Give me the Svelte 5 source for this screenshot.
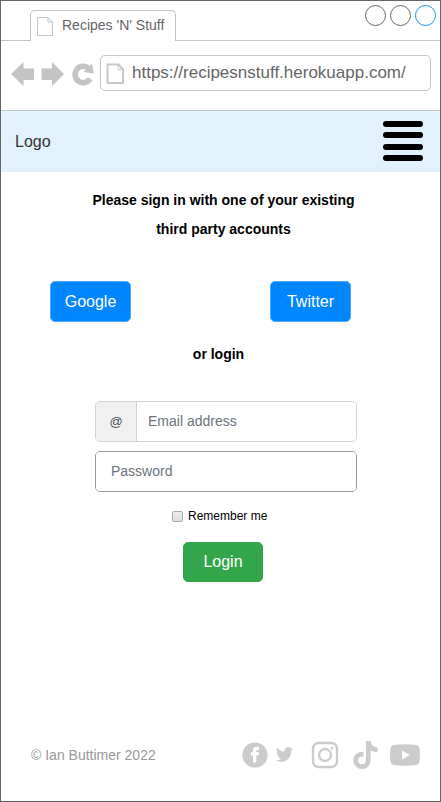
<script>
  let email = $state('');
  let password = $state('');
  let remember = $state(false);
  const providers = ['Google', 'Twitter'];
</script>

<div class="window">
  <div class="tabs">
    <div class="tab">
      <svg width="18" height="20" viewBox="0 0 18 20" fill="none" stroke="#c4c4c4"><path d="M1.500 1.500H12L16.500 6V19.500H1.500ZM12 1.500V6H16.500" /></svg>
      <span>Recipes 'N' Stuff</span>
    </div>
    <div class="controls"><i></i><i></i><i class="active"></i></div>
  </div>

  <div class="toolbar">
    <svg class="history" width="84" height="26" viewBox="0 0 84 26" fill="#c4c4c4">
      <path d="M0 13 12.500 1V7.500H23V19H12.500V25ZM53 13 41 1V7.500H30.500V19H41V25Z" />
      <path d="M79.300 17.800A8.200 8.200 0 1 1 78 7.600" fill="none" stroke="#c4c4c4" stroke-width="5.600" />
      <path d="M81 2.500 82.800 12.600 72.500 11Z" />
    </svg>
    <div class="address">
      <svg width="19" height="22" viewBox="0 0 19 22" fill="none" stroke="#c8c8c8" stroke-width="2"><path d="M1.500 1.500H12.500L17 6.500V20H1.500Z" /><path d="M12 1.500V6.500H17" stroke-width="1" /></svg>
      <span>https://recipesnstuff.herokuapp.com/</span>
    </div>
  </div>

  <nav>
    <span>Logo</span>
    <button class="menu" aria-label="Menu"><i></i><i></i><i></i><i></i></button>
  </nav>

  <main>
    <h1>Please sign in with one of your existing<br />third party accounts</h1>
    <div class="providers">
      {#each providers as provider}
        <button class="btn">{provider}</button>
      {/each}
    </div>
    <h2>or login</h2>
    <form onsubmit={(e) => e.preventDefault()}>
      <div class="field group">
        <span class="at">@</span>
        <input type="text" placeholder="Email address" bind:value={email} />
      </div>
      <div class="field password">
        <input type="password" placeholder="Password" bind:value={password} />
      </div>
      <label><input type="checkbox" bind:checked={remember} />Remember me</label>
      <button class="btn login">Login</button>
    </form>
  </main>

  <footer>
    <span>© Ian Buttimer 2022</span>
    <div class="social">
      <svg width="26" height="26" viewBox="0 0 26 26"><circle cx="13" cy="13" r="12.600" fill="#ccc" /><path d="M11 20.500V13.500H8.800V10.300H11V8.300C11 5.600 12.400 4.700 14.700 4.700H17V8H15.500C14.600 8 14.300 8.400 14.300 9.200V10.300H17L16.600 13.500H14.300V20.500Z" fill="#fff" /></svg>
      <svg class="bird" width="17" height="15" viewBox="0 2 24 20" preserveAspectRatio="none"><path d="M23.950 4.570a10 10 0 0 1-2.820.780 4.960 4.960 0 0 0 2.160-2.730 9.900 9.900 0 0 1-3.130 1.190 4.920 4.920 0 0 0-8.380 4.480C7.690 8.100 4.070 6.130 1.640 3.160a4.930 4.930 0 0 0 1.520 6.570 4.900 4.900 0 0 1-2.230-.620v.060a4.920 4.920 0 0 0 3.950 4.830 5 5 0 0 1-2.210.080 4.940 4.940 0 0 0 4.600 3.420A9.870 9.870 0 0 1 0 19.540a14 14 0 0 0 7.550 2.210c9.050 0 14-7.500 14-13.980 0-.210 0-.420-.020-.630a9.940 9.940 0 0 0 2.420-2.570z" fill="#ccc" /></svg>
      <svg class="camera" width="28" height="28" viewBox="0 0 28 28" fill="none" stroke="#ccc" stroke-width="2.400"><rect x="2" y="2" width="24" height="24" rx="5.500" /><circle cx="14" cy="14" r="6" /><circle cx="21" cy="7" r="1.500" fill="#ccc" stroke="none" /></svg>
      <svg class="note" width="25" height="28" viewBox="0 0 25 28"><path d="M13 0H17.600C18 3.800 20.500 6.200 24.600 6.500V11.200C22 11.300 19.700 10.500 17.700 9.100V19C17.700 24.500 13.700 28 9 28C4 28 .400 24.200 .400 19.400C.400 13.800 5 10.100 10.500 10.900V15.700C7.500 14.900 5 16.600 5 19.400C5 21.700 6.800 23.300 9 23.300C11.500 23.300 13 21.600 13 18.900Z" fill="#ccc" /></svg>
      <svg class="video" width="30" height="22" viewBox="0 0 30 22"><path d="M4 .900Q15-.400 26 .900Q29 1.200 29.500 4.500Q30.300 11 29.500 17.500Q29 20.800 26 21.100Q15 22.200 4 21.100Q1 20.800 .500 17.500Q-.300 11 .500 4.500Q1 1.200 4 .900Z" fill="#ccc" /><path d="M12 6.500V15.500L19.800 11Z" fill="#fff" /></svg>
    </div>
  </footer>
</div>

<style>
  :global(body) { margin: 0; }
  .window, .window * { box-sizing: border-box; }
  .window {
    width: 441px;
    height: 802px;
    border: 1px solid #666;
    background: #fff;
    display: flex;
    flex-direction: column;
    font-family: "Liberation Sans", Arial, sans-serif;
    overflow: hidden;
  }
  svg { display: block; flex: none; }
  span { white-space: nowrap; }
  button { padding: 0; border: 0; font-family: inherit; }
  .tabs {
    height: 40px;
    flex: none;
    display: flex;
    align-items: flex-start;
    justify-content: space-between;
    border-bottom: 1px solid #c4c4c4;
    padding: 9px 4px 0 29px;
  }
  .tab {
    width: 146px;
    height: 31px;
    display: flex;
    border: 1px solid #c4c4c4;
    border-bottom: 0;
    border-radius: 5px 5px 0 0;
    background: #fff;
    padding: 5px 0 0 5px;
  }
  .tab span { font-size: 14px; line-height: 18px; color: #666; margin-left: 8px; }
  .controls { display: flex; gap: 4px; margin-top: -5px; }
  .controls i { width: 21px; height: 21px; border: 1px solid #666; border-radius: 50%; }
  .controls .active { border-color: #1890f5; }
  .toolbar {
    height: 70px;
    flex: none;
    display: flex;
    align-items: flex-start;
    padding: 14px 9px 0 10px;
    border-bottom: 1px solid #c4c4c4;
  }
  .history { margin-top: 6px; }
  .address {
    flex: 1;
    height: 36px;
    margin-left: 5px;
    border: 1px solid #c4c4c4;
    border-radius: 5px;
    display: flex;
    padding: 7px 0 0 5px;
  }
  .address span { font-size: 17px; line-height: 20px; color: #666; margin-left: 7px; }
  nav {
    height: 61px;
    flex: none;
    margin: 0 -1px;
    display: flex;
    align-items: center;
    justify-content: space-between;
    background: #e1f2fd;
    border: solid #a4abb0;
    border-width: 0 1px;
    padding: 0 17px 0 14px;
    font-size: 16px;
    color: #333;
  }
  .menu { width: 40px; margin-bottom: 1px; display: flex; flex-direction: column; gap: 5.500px; background: none; }
  .menu i { height: 6px; border-radius: 3px; background: #000; }
  main { flex: 1; display: flex; flex-direction: column; }
  h1, h2 { margin: 0; font-size: 14px; line-height: 29px; text-align: center; color: #000; }
  h1 { margin: 14px 0 0 6px; }
  .providers { display: flex; justify-content: space-between; margin: 37px 89px 0 49px; }
  .btn {
    width: 81px;
    height: 41px;
    border-radius: 5px;
    border: 1px solid #4fa8ff;
    background: #0086ff;
    color: #fff;
    font-size: 16px;
    line-height: 38px;
  }
  h2 { margin: 18px 4px 0 0; }
  form { width: 262px; margin: 32px 0 0 94px; display: flex; flex-direction: column; }
  .field { display: flex; height: 41px; border: 1px solid #ced4da; border-radius: 5px; overflow: hidden; }
  .at {
    width: 41px;
    background: #f0f0f0;
    border-right: 1px solid #ced4da;
    color: #495057;
    font-size: 13px;
    line-height: 39px;
    text-align: center;
  }
  .field input {
    flex: 1;
    min-width: 0;
    border: 0;
    outline: 0;
    padding: 0 11px 1px;
    font: 14px "Liberation Sans", Arial, sans-serif;
  }
  .field input::placeholder { color: #6c757d; opacity: 1; }
  .password { margin-top: 9px; border-color: #999; }
  .password input { padding-left: 15px; }
  label {
    display: flex;
    align-items: center;
    height: 16px;
    margin: 16px 0 0 77px;
    font-size: 12px;
    color: #000;
  }
  label input {
    appearance: none;
    width: 11px;
    height: 11px;
    margin: 1px 5px 0 0;
    border: 1px solid #aaa;
    border-radius: 2px;
    background: linear-gradient(#eee, #ddd);
  }
  .login { width: 80px; height: 40px; margin: 17.500px 0 0 88px; border-color: #33a64c; background: #33a64c; }
  footer {
    height: 61px;
    margin-bottom: 16px;
    flex: none;
    display: flex;
    align-items: center;
    justify-content: space-between;
    padding: 0 20px 0 30px;
    font-size: 14px;
    color: #999;
  }
  .social { display: flex; align-items: center; }
  .bird { margin-left: 8px; }
  .camera { margin-left: 18px; }
  .note { margin-left: 14px; }
  .video { margin-left: 12px; }
</style>
